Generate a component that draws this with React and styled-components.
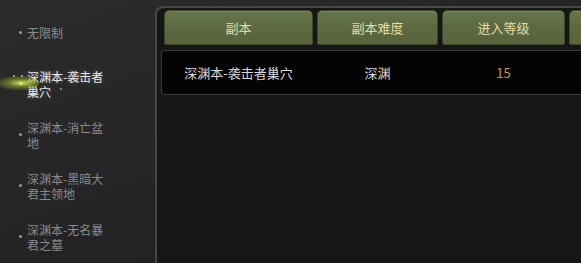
import React from 'react';
import styled, { createGlobalStyle } from 'styled-components';

const GlobalStyle = createGlobalStyle`
  html, body {
    margin: 0;
    padding: 0;
    background: #222;
  }
  body {
    font-family: "Noto Sans CJK SC", "Noto Sans", sans-serif;
  }
`;

const modes = [
  { name: '无限制' },
  { name: '深渊本-袭击者巢穴', active: true },
  { name: '深渊本-消亡盆地' },
  { name: '深渊本-黑暗大君主领地' },
  { name: '深渊本-无名暴君之墓' },
];

const columns = ['副本', '副本难度', '进入等级', ''];

const rows = [{ dungeon: '深渊本-袭击者巢穴', level: '深渊', enter: '15' }];

const App = () => {
  return (
    <Screen>
      <GlobalStyle />
      <Sidebar>
        {modes.map(m => (
          <ModeItem key={m.name} active={m.active}>
            <Bullet active={m.active} />
            <ModeLabel active={m.active}>{m.name}</ModeLabel>
          </ModeItem>
        ))}
      </Sidebar>
      <Panel>
        <HeaderRow>
          {columns.map((c, i) => (
            <HeaderCell key={i}>{c}</HeaderCell>
          ))}
        </HeaderRow>
        {rows.map(r => (
          <DataRow key={r.dungeon}>
            <Cell>{r.dungeon}</Cell>
            <Cell>{r.level}</Cell>
            <Cell highlight>{r.enter}</Cell>
            <Cell />
          </DataRow>
        ))}
      </Panel>
    </Screen>
  );
};
export default App;

const Screen = styled.div`
  width: 581px;
  height: 263px;
  overflow: hidden;
  display: flex;
  background: linear-gradient(160deg, #2b2b2b 0%, #252525 45%, #1e1e1e 100%);
`;

const Sidebar = styled.div`
  width: 155px;
  flex-shrink: 0;
  padding-top: 7px;
  box-sizing: border-box;
`;

const ModeItem = styled.div`
  position: relative;
  height: 51px;
  display: flex;
  align-items: center;
  padding-left: 19px;
`;

const Bullet = styled.span`
  position: relative;
  width: 3px;
  height: 3px;
  border-radius: 50%;
  background: ${props => (props.active ? '#f4ffb0' : '#9a9a9a')};
  margin-right: 5px;
  flex-shrink: 0;

  ${props =>
    props.active &&
    `
    &::before {
      content: '';
      position: absolute;
      left: -26px;
      top: -7px;
      width: 46px;
      height: 16px;
      border-radius: 50%;
      background: radial-gradient(ellipse at 62% 50%, rgba(225, 245, 95, 0.9) 0%, rgba(170, 200, 40, 0.45) 35%, rgba(120, 150, 20, 0) 70%);
    }
    &::after {
      content: '';
      position: absolute;
      left: -6px;
      top: -7px;
      width: 2px;
      height: 2px;
      border-radius: 50%;
      background: #bbb;
      box-shadow: 8px 0 0 #bbb, 47px 13px 0 #999;
    }
  `}
`;

const ModeLabel = styled.span`
  width: 80px;
  font-size: 12px;
  line-height: 15px;
  color: ${props => (props.active ? '#e8e8e8' : '#8a8a8a')};
  text-shadow: ${props => (props.active ? '0 0 4px rgba(255,255,255,0.25)' : 'none')};
`;

const Panel = styled.div`
  flex: 1;
  margin-top: 6px;
  border: 2px solid #4a4740;
  border-right: none;
  border-bottom: none;
  border-top-left-radius: 8px;
  background: #161616;
  padding: 2px 0 0 4px;
  display: flex;
  flex-direction: column;
  gap: 5px;
  min-width: 0;
`;

const HeaderRow = styled.div`
  display: grid;
  grid-template-columns: 149px 121px 123px 40px;
  gap: 4px;
  padding-left: 3px;
`;

const HeaderCell = styled.div`
  height: 35px;
  box-sizing: border-box;
  border: 1px solid #3e472c;
  border-radius: 5px 5px 2px 2px;
  background: linear-gradient(180deg, #677549 0%, #5d6a41 50%, #56633b 100%);
  box-shadow: inset 0 1px 0 rgba(200, 210, 150, 0.18);
  color: #e3dca2;
  font-size: 13px;
  display: flex;
  align-items: center;
  justify-content: center;
`;

const DataRow = styled.div`
  display: grid;
  grid-template-columns: 149px 121px 123px 40px;
  gap: 4px;
  height: 45px;
  box-sizing: border-box;
  padding-left: 2px;
  border: 1px solid #3b3b3b;
  border-right: none;
  border-radius: 4px 0 0 4px;
  background: #040404;
  align-items: center;
`;

const Cell = styled.div`
  text-align: center;
  font-size: 13px;
  color: ${props => (props.highlight ? '#c9925a' : '#d8d8d8')};
  white-space: nowrap;
`;
